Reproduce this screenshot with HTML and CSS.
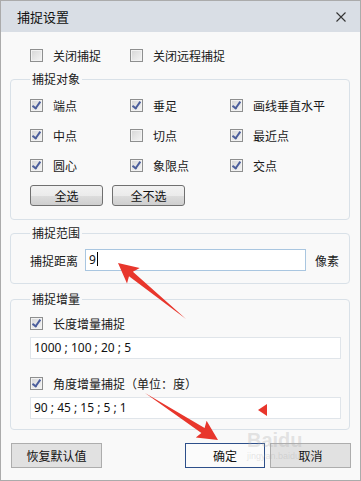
FILE: index.html
```html
<!DOCTYPE html>
<html lang="zh-CN">
<head>
  <meta charset="UTF-8" />
  <title>捕捉设置</title>
  <link rel="stylesheet" href="styles.css">
</head>
<body>
  <div class="window">
    <div class="titlebar">
      <span class="title">捕捉设置</span>
      <svg class="close" width="10" height="10" viewBox="0 0 10 10"><path d="M0.5 0.5L9.5 9.5M9.5 0.5L0.5 9.5" stroke="#333" stroke-width="1.1" fill="none"/></svg>
    </div>

    <div class="content">
      <div class="top-row">
        <label class="check"><span class="box"></span>关闭捕捉</label>
        <label class="check"><span class="box"></span>关闭远程捕捉</label>
      </div>

      <fieldset class="group group-objects">
        <legend>捕捉对象</legend>
        <div class="check-grid">
          <label class="check"><span class="box on"></span>端点</label>
          <label class="check"><span class="box on"></span>垂足</label>
          <label class="check"><span class="box on"></span>画线垂直水平</label>
          <label class="check"><span class="box on"></span>中点</label>
          <label class="check"><span class="box"></span>切点</label>
          <label class="check"><span class="box on"></span>最近点</label>
          <label class="check"><span class="box on"></span>圆心</label>
          <label class="check"><span class="box on"></span>象限点</label>
          <label class="check"><span class="box on"></span>交点</label>
        </div>
        <div class="btn-row">
          <button class="btn">全选</button>
          <button class="btn">全不选</button>
        </div>
      </fieldset>

      <fieldset class="group group-range">
        <legend>捕捉范围</legend>
        <div class="range-row">
          <span>捕捉距离</span>
          <div class="textbox focus">9<span class="caret"></span></div>
          <span>像素</span>
        </div>
      </fieldset>

      <fieldset class="group group-step">
        <legend>捕捉增量</legend>
        <label class="check"><span class="box on"></span>长度增量捕捉</label>
        <div class="textbox">1000 ; 100 ; 20 ; 5</div>
        <label class="check second"><span class="box on"></span>角度增量捕捉（单位：度）</label>
        <div class="textbox">90 ; 45 ; 15 ; 5 ; 1</div>
      </fieldset>

      <div class="footer">
        <button class="fbtn">恢复默认值</button>
        <div class="footer-right">
          <button class="fbtn ok">确定</button>
          <button class="fbtn">取消</button>
        </div>
      </div>
    </div>

    <div class="watermark">
      <span class="wm-big">Baidu</span>
      <span class="wm-small">jingyan.baidu.com</span>
    </div>

    <svg class="marks" width="361" height="481" viewBox="0 0 361 481">
      <polygon fill="#e8362c" points="118,263 139.7,268.1 132.9,271.7 186,319 129,276.3 127,283.5"/>
      <polygon fill="#e8362c" points="218,440 195.8,437.6 201.4,432.9 145,393 204.6,427.9 206.6,420.8"/>
      <polygon fill="#e8362c" points="258,410 267,404 267,416"/>
    </svg>
  </div>
</body>
</html>
```

FILE: styles.css
```css
body {
  margin: 0;
  font-family: "Noto Sans CJK SC", "Noto Sans", sans-serif;
  font-size: 12px;
  color: #1a1a1a;
  background: #fff;
}
.window {
  position: relative;
  width: 361px;
  height: 481px;
  box-sizing: border-box;
  border: 1px solid #ababab;
  background: #f9f9f9;
}
.titlebar {
  height: 31px;
  background: #d9dee5;
  display: flex;
  align-items: center;
  justify-content: space-between;
  padding: 0 14px 0 16px;
}
.title {
  font-size: 13px;
  color: #111;
}
.content {
  padding: 17px 10px 0 9px;
}
.top-row {
  display: grid;
  grid-template-columns: 100px 100px;
  padding-left: 20px;
  height: 13px;
}
.check {
  display: flex;
  align-items: center;
  gap: 10px;
  height: 13px;
  line-height: 13px;
  white-space: nowrap;
}
.box {
  position: relative;
  flex: none;
  width: 13px;
  height: 13px;
  box-sizing: border-box;
  border: 1px solid #8e8f8f;
  background: linear-gradient(135deg, #d6d6d6, #f5f5f5);
  box-shadow: inset 0 0 0 1px #f2f2f2;
}
.box.on::after {
  content: "";
  position: absolute;
  left: 3px;
  top: 0px;
  width: 3px;
  height: 7px;
  border: solid #4b5e9c;
  border-width: 0 2px 2px 0;
  transform: rotate(35deg);
}
.group {
  margin: 0;
  min-width: 0;
  border: 1px solid #d9e1e8;
  border-radius: 4px;
  padding: 0 8px 0 19px;
}
.group legend {
  padding: 0 2px;
  line-height: 14px;
  height: 14px;
}
.group-objects {
  margin-top: 10px;
  padding-top: 13px;
  padding-bottom: 13px;
}
.check-grid {
  display: grid;
  grid-template-columns: 100px 100px 100px;
  grid-auto-rows: 13px;
  row-gap: 17px;
}
.btn-row {
  display: flex;
  gap: 9px;
  margin-top: 13px;
}
.btn {
  width: 73px;
  height: 21px;
  padding: 0;
  font: inherit;
  color: #111;
  border: 1px solid #707070;
  border-radius: 3px;
  background: linear-gradient(#f2f2f2 0%, #ebebeb 50%, #dddddd 51%, #cfcfcf 100%);
}
.group-range {
  margin-top: 6px;
  padding-top: 9px;
  padding-bottom: 12px;
  padding-right: 10px;
}
.range-row {
  display: flex;
  align-items: center;
}
.range-row .textbox {
  flex: 1;
  margin: 0 9px 0 7px;
}
.textbox {
  height: 22px;
  box-sizing: border-box;
  border: 1px solid #e0e5ea;
  background: #fff;
  padding-left: 3px;
  line-height: 20px;
  font-family: "Noto Sans", "Noto Sans CJK SC", sans-serif;
  font-size: 12px;
  color: #111;
  white-space: nowrap;
}
.textbox.focus {
  border-color: #a9c6e0;
}
.caret {
  display: inline-block;
  width: 1px;
  height: 14px;
  background: #000;
  margin-left: 1px;
  vertical-align: -2px;
}
.group-step {
  margin-top: 8px;
  padding-top: 11px;
  padding-bottom: 10px;
}
.group-step .textbox {
  margin-top: 7px;
}
.group-step .second {
  margin-top: 18px;
}
.footer {
  display: flex;
  justify-content: space-between;
  margin-top: 13px;
  margin-right: -1px;
  padding-left: 1px;
}
.footer-right {
  display: flex;
  gap: 5px;
}
.fbtn {
  width: 91px;
  height: 25px;
  padding: 0;
  font: inherit;
  font-size: 12px;
  color: #111;
  border: 1px solid #adadad;
  background: #e1e1e1;
}
.footer-right .fbtn {
  width: 81px;
}
.fbtn.ok {
  width: 80px;
  border-color: #2d4f8a;
  background: #fbfbfb;
}
.watermark {
  position: absolute;
  left: 246px;
  top: 428px;
  display: flex;
  flex-direction: column;
  white-space: nowrap;
  color: rgba(170, 170, 170, 0.3);
  pointer-events: none;
}
.wm-big {
  font-family: "Liberation Sans", sans-serif;
  font-size: 20px;
  font-weight: bold;
  line-height: 22px;
}
.wm-small {
  font-family: "Liberation Sans", sans-serif;
  font-size: 9px;
  line-height: 11px;
}
.marks {
  position: absolute;
  left: -1px;
  top: -1px;
  pointer-events: none;
}
```
